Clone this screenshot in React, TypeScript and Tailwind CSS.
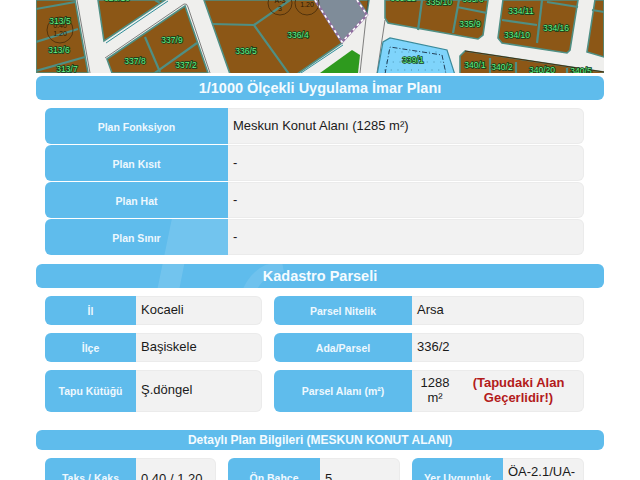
import * as React from 'react';

const parcelLabels: [string, number, number][] = [
  ['328/10', 117, 1],
  ['313/5', 60, 24],
  ['313/6', 59, 53],
  ['313/7', 67, 72],
  ['337/9', 172, 43],
  ['337/8', 135, 64],
  ['337/2', 186, 68],
  ['336/5', 246, 54],
  ['336/4', 298, 38],
  ['335/11', 403, 1],
  ['335/10', 439, 5],
  ['335/8', 473, 2],
  ['335/9', 470, 27],
  ['334/11', 521, 14],
  ['334/10', 517, 38],
  ['334/16', 556, 31],
  ['339/1', 413, 63],
  ['340/1', 475, 68],
  ['340/2', 502, 70],
  ['340/20', 542, 73],
  ['340/5', 581, 74],
];

const edges: string[] = [
  'M36 9L75 2',
  'M36 42L78 29',
  'M36 71L85 57',
  'M155 0L160 3',
  'M145 37L160 72',
  'M197 43L152 75',
  'M212 24L254 25L289 74',
  'M254 25L290 0',
  'M422 0L418 30',
  'M459 0L453 33',
  'M457 7L487 13',
  'M542 0L537 43',
  'M502 20L537 25',
  'M547 2L578 7',
  'M592 10L604 12',
  'M490 58L490 75',
  'M516 62L516 75',
  'M567 68L567 75',
];

function PlanMap() {
  return (
    <svg viewBox="36 0 568 73" className="block h-[73px] w-[568px]">
      <rect x="36" y="0" width="568" height="73" fill="#efefed" />
      {/* parcels */}
      <g fill="#8c5716" stroke="#4f8f84" strokeWidth="1.6">
        <path d="M36 0L75 0L88 73L36 73Z" />
        <path d="M98 0L165 0L104 41Z" />
        <path d="M107 59L185 6L208 73L112 73Z" />
        <path d="M204 0L315 0L342 43L297 74L230 74Z" />
        <path d="M358 0L367 13L369 0Z" />
        <path d="M385 0L385 18L388 23L478 39L483 35L488 0Z" />
        <path d="M503 0L498 38L502 43L567 53L570 50L578 0Z" />
        <path d="M595 0L587 52L604 57L604 0Z" />
        <path d="M460 56L465 51L604 72L604 75L460 75Z" />
      </g>
      <path d="M465 51L604 72" fill="none" stroke="#4a2c0a" strokeWidth="1" />
      {/* parcel edges */}
      <g fill="none" stroke="#4f8f84" strokeWidth="2.2">
        {edges.map((d) => (
          <path key={d} d={d} />
        ))}
      </g>
      {/* road lines */}
      <g fill="none" stroke="#333333" strokeWidth="0.6">
        <path d="M77 0L90 73" />
        <path d="M105 58L184 4Q187 3 188 7L210 73" />
        <path d="M368 0L360 73" />
        <path d="M385 20L377 73" />
      </g>
      <path d="M106 43L168 1M298 75L343 45" fill="none" stroke="#2f8f9a" strokeWidth="1" />
      {/* selected parcel */}
      <path d="M315 0L342 42L367 15L357 0Z" fill="#7f8c99" />
      <path d="M315 0L342 42L367 15L357 0" fill="none" stroke="#8f6f9f" strokeWidth="2.4" />
      <path d="M315 0L342 42L367 15L357 0" fill="none" stroke="#ffffff" strokeWidth="1.6" strokeDasharray="3 3" />
      {/* green area */}
      <path d="M320 73L352 50L360 55L358 73Z" fill="#2e9a1e" />
      {/* blue area */}
      <path d="M377 75L383 42L390 38L447 50L455 75Z" fill="#7fd4fb" stroke="#3a8a9a" strokeWidth="1.2" />
      <path d="M385 74L390 47L442 55L446 74" fill="none" stroke="#22405a" strokeWidth="1" strokeDasharray="5 2 1 2" />
      <path d="M388 52H440M386 62H445M384 70H448" fill="none" stroke="#2f6f8a" strokeWidth="0.8" strokeDasharray="0.8 6" />
      {/* density circles */}
      <g fill="none" stroke="#3a2408" strokeWidth="0.7">
        <circle cx="60" cy="30" r="13" />
        <circle cx="280" cy="3" r="12" />
        <circle cx="307" cy="3" r="12" />
      </g>
      <g fill="#2b1a05" fontSize="7" textAnchor="middle" fontFamily="'Liberation Sans', sans-serif">
        <text x="60" y="28">0.40</text>
        <text x="60" y="36">1.20</text>
        <text x="280" y="3">A-3</text>
        <text x="280" y="11">3</text>
        <text x="307" y="7">1.20</text>
      </g>
      {/* labels */}
      <g
        fill="#6cf286"
        stroke="#0c3a1a"
        strokeWidth="1.5"
        fontSize="8.5"
        textAnchor="middle"
        fontFamily="'Liberation Sans', sans-serif"
        className="[paint-order:stroke]"
      >
        {parcelLabels.map(([t, x, y]) => (
          <text key={t} x={x} y={y}>
            {t}
          </text>
        ))}
      </g>
    </svg>
  );
}

function SectionTitle({ title, className }: { title: string; className: string }) {
  return (
    <div className={`flex items-center justify-center rounded-[6px] bg-[#5fbcec] font-bold text-[#f4fbff] ${className}`}>
      {title}
    </div>
  );
}

function Row({
  label,
  children,
  labelClass,
  rowClass,
}: {
  label: string;
  children: React.ReactNode;
  labelClass: string;
  rowClass: string;
}) {
  return (
    <div className={`flex ${rowClass}`}>
      <div
        className={`flex shrink-0 items-center justify-center rounded-l-[6px] bg-[#5fbcec] text-[10.5px] font-bold text-[#eef8fe] ${labelClass}`}
      >
        {label}
      </div>
      <div className="min-w-0 flex-1 rounded-r-[6px] border border-l-0 border-[#ebebeb] bg-[#f2f2f2] text-[13px] leading-[15px] text-[#1a1a1a]">
        {children}
      </div>
    </div>
  );
}

export default function App() {
  return (
    <div className="relative h-[480px] w-[640px] overflow-hidden bg-white font-['Liberation_Sans',Arial,sans-serif]">
      <div className="mx-[36px] w-[568px]">
        <PlanMap />

        <SectionTitle title="1/1000 Ölçekli Uygulama İmar Planı" className="mt-[3px] h-[24px] pt-[1px] text-[14.5px]" />

        <div className="ml-[9px] mt-[8px] flex w-[539px] flex-col gap-[1px]">
          {[
            ['Plan Fonksiyon', 'Meskun Konut Alanı (1285 m²)'],
            ['Plan Kısıt', '-'],
            ['Plan Hat', '-'],
            ['Plan Sınır', '-'],
          ].map(([label, value]) => (
            <Row key={label} label={label} labelClass="w-[183px] pt-[4px]" rowClass="h-[36px]">
              <div className="pl-[5px] pt-[9px]">{value}</div>
            </Row>
          ))}
        </div>

        <SectionTitle title="Kadastro Parseli" className="mt-[9px] h-[24px] pt-[1px] text-[14.5px]" />

        <div className="ml-[9px] mt-[8px] grid w-[539px] grid-cols-[217px_310px] gap-x-[12px] gap-y-[8px]">
          <Row label="İl" labelClass="w-[91px] pt-[2px]" rowClass="h-[29px]">
            <div className="pl-[5px] pt-[5px]">Kocaeli</div>
          </Row>
          <Row label="Parsel Nitelik" labelClass="w-[138px] pt-[2px]" rowClass="h-[29px]">
            <div className="pl-[5px] pt-[5px]">Arsa</div>
          </Row>
          <Row label="İlçe" labelClass="w-[91px] pt-[2px]" rowClass="h-[29px]">
            <div className="pl-[5px] pt-[5px]">Başiskele</div>
          </Row>
          <Row label="Ada/Parsel" labelClass="w-[138px] pt-[2px]" rowClass="h-[29px]">
            <div className="pl-[5px] pt-[5px]">336/2</div>
          </Row>
          <Row label="Tapu Kütüğü" labelClass="w-[91px] pt-[2px]" rowClass="h-[42px]">
            <div className="pl-[5px] pt-[11px]">Ş.döngel</div>
          </Row>
          <Row label="Parsel Alanı (m²)" labelClass="w-[138px] pt-[2px]" rowClass="h-[42px]">
            <div className="flex items-center pt-[4px]">
              <div className="w-[46px] text-center">1288 m²</div>
              <div className="flex-1 pl-[6px] pr-[10px] text-center font-bold text-[#b31b1b]">
                (Tapudaki Alan Geçerlidir!)
              </div>
            </div>
          </Row>
        </div>

        <SectionTitle title="Detaylı Plan Bilgileri (MESKUN KONUT ALANI)" className="mt-[18px] h-[20px] text-[12px]" />

        <div className="ml-[9px] mt-[8px] grid w-[539px] grid-cols-[171px_172px_172px] gap-x-[12px]">
          <Row label="Taks / Kaks" labelClass="w-[91px] pt-[2px]" rowClass="h-[40px]">
            <div className="pl-[5px] pt-[12px]">0.40 / 1.20</div>
          </Row>
          <Row label="Ön Bahçe" labelClass="w-[92px] pt-[2px]" rowClass="h-[40px]">
            <div className="pl-[5px] pt-[12px]">5</div>
          </Row>
          <Row label="Yer Uygunluk" labelClass="w-[91px] pt-[2px]" rowClass="h-[40px]">
            <div className="pl-[5px] pt-[5px]">ÖA-2.1/UA-</div>
          </Row>
        </div>
      </div>

      {/* faint watermark over the page */}
      <svg viewBox="0 0 640 480" className="pointer-events-none absolute inset-0 h-[480px] w-[640px]">
        <path d="M172 218L230 218L228 255L186 255L178 296L156 296Z" fill="#ffffff" fillOpacity="0.12" />
        <path d="M240 296Q252 262 282 262L284 272Q262 274 254 296Z" fill="#ffffff" fillOpacity="0.1" />
      </svg>
    </div>
  );
}
